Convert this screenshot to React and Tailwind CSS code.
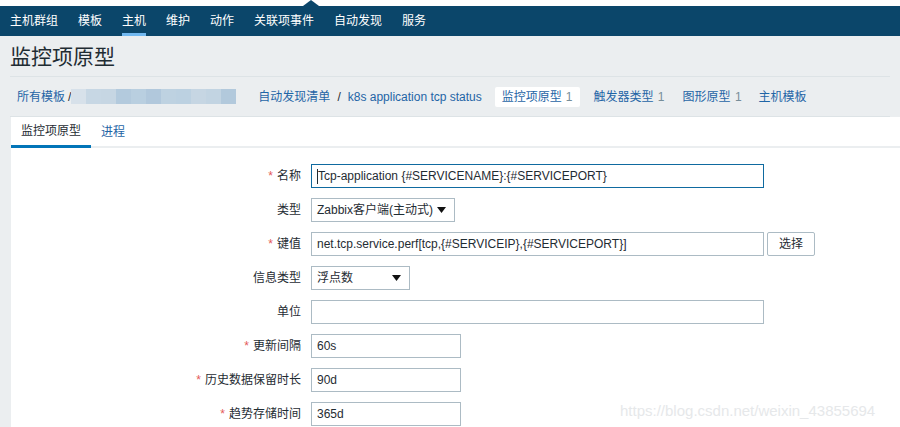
import React from 'react';

const font = { fontFamily: '"Liberation Sans", Arial, "Noto Sans CJK SC", sans-serif' };

const navItems = ['主机群组', '模板', '主机', '维护', '动作', '关联项事件', '自动发现', '服务'];

// pixelated blur blocks in the breadcrumb
const blurBlocks = ['#d7e1ea', '#c7d7e4', '#c6d6e3', '#b3cadd', '#b9cfe0', '#b1c8dc', '#bed2e1', '#bcd1e1', '#c6d6e3', '#c2d4e2', '#b2c9dc'];

function Caret() {
  return (
    <svg width="9" height="6" viewBox="0 0 9 6" className="ml-auto shrink-0">
      <path d="M0 0 L9 0 L4.5 6 Z" fill="#111" />
    </svg>
  );
}

function Label({ text, required }) {
  return (
    <div className="w-[311px] shrink-0 pr-[10px] text-right text-[12px] text-[#1f2c33] whitespace-nowrap">
      {required && <span className="text-[#e45959] mr-[4px]">*</span>}
      {text}
    </div>
  );
}

function TextField({ value, width, focused }) {
  return (
    <div
      className={`h-[24px] flex items-center px-[5px] text-[12px] text-[#1f2c33] bg-white border whitespace-nowrap ${
        focused ? 'border-[#0f6aa0]' : 'border-[#acbbc4]'
      } ${width}`}
    >
      {focused && <span className="w-px h-[15px] bg-[#1f2c33]" />}
      {value}
    </div>
  );
}

function Select({ value, width }) {
  return (
    <div className={`h-[24px] flex items-center gap-[4px] pl-[5px] pr-[8px] text-[12px] text-[#1f2c33] bg-white border border-[#acbbc4] whitespace-nowrap ${width}`}>
      <span>{value}</span>
      <Caret />
    </div>
  );
}

function Row({ label, required, children }) {
  return (
    <div className="flex items-center h-[24px]">
      <Label text={label} required={required} />
      <div className="flex items-center gap-[3px]">{children}</div>
    </div>
  );
}

export default function App() {
  return (
    <div className="w-[900px] h-[427px] overflow-hidden bg-[#ebeef0] relative" style={font}>
      {/* top strip */}
      <div className="h-[6px] bg-white relative">
        <svg width="16" height="6" viewBox="0 0 16 6" className="absolute left-[303px] top-0">
          <path d="M0 6 L8 0 L16 6 Z" fill="#0b466a" />
        </svg>
      </div>

      {/* main nav */}
      <div className="h-[30px] bg-[#0b466a] flex items-stretch pl-[10px] gap-[20px] text-[12px] text-white">
        {navItems.map((item) => (
          <div
            key={item}
            className={`flex items-center border-b-[3px] pt-[3px] ${
              item === '主机' ? 'border-[#71b8f0]' : 'border-transparent'
            }`}
          >
            {item}
          </div>
        ))}
      </div>

      {/* title */}
      <div className="h-[41px] mx-[10px] flex items-center border-b border-[#dde3e6]">
        <h1 className="text-[21px] text-[#1f2c33] leading-none">监控项原型</h1>
      </div>

      {/* breadcrumbs */}
      <div className="h-[40px] mx-[10px] flex items-center text-[12px] border-b border-[#dde3e6] whitespace-nowrap">
        <span className="pl-[7px] text-[#1f65a6]">所有模板</span>
        <span className="ml-[3px] text-[#1f2c33]">/</span>
        <div className="flex h-[15px]">
          {blurBlocks.map((c, i) => (
            <div key={i} className="w-[15px] h-[15px]" style={{ background: c }} />
          ))}
        </div>
        <span className="ml-[22px] text-[#1f65a6]">自动发现清单</span>
        <span className="mx-[7px] text-[#1f2c33]">/</span>
        <span className="text-[#1f65a6]">k8s application tcp status</span>
        <span className="ml-[13px] bg-white rounded-[2px] px-[7px] h-[20px] flex items-center text-[#1f65a6]">
          监控项原型 <span className="ml-1 text-[#768d99]">1</span>
        </span>
        <span className="ml-[14px] text-[#1f65a6]">
          触发器类型 <span className="ml-px text-[#768d99]">1</span>
        </span>
        <span className="ml-[18px] text-[#1f65a6]">
          图形原型 <span className="ml-px text-[#768d99]">1</span>
        </span>
        <span className="ml-[17px] text-[#1f65a6]">主机模板</span>
      </div>

      {/* panel */}
      <div className="ml-[11px] bg-white h-[320px]">
        <div className="flex h-[31px] border-b-[2px] border-[#ebeef0] text-[12px]">
          <div className="w-[80px] flex items-center justify-center border-b-[3px] border-[#0275b8] -mb-[2px] text-[#1f2c33]">
            监控项原型
          </div>
          <div className="px-[10px] flex items-center text-[#1f65a6]">进程</div>
        </div>

        <div className="flex flex-col gap-[10px] pt-[16px] -ml-[11px]">
          <Row label="名称" required>
            <TextField value="Tcp-application {#SERVICENAME}:{#SERVICEPORT}" width="w-[453px]" focused />
          </Row>
          <Row label="类型">
            <Select value="Zabbix客户端(主动式)" width="w-[144px]" />
          </Row>
          <Row label="键值" required>
            <TextField value="net.tcp.service.perf[tcp,{#SERVICEIP},{#SERVICEPORT}]" width="w-[453px]" />
            <button className="h-[24px] w-[48px] border border-[#acbbc4] rounded-[2px] bg-white text-[12px] text-[#1f2c33]">
              选择
            </button>
          </Row>
          <Row label="信息类型">
            <Select value="浮点数" width="w-[99px]" />
          </Row>
          <Row label="单位">
            <TextField value="" width="w-[453px]" />
          </Row>
          <Row label="更新间隔" required>
            <TextField value="60s" width="w-[150px]" />
          </Row>
          <Row label="历史数据保留时长" required>
            <TextField value="90d" width="w-[150px]" />
          </Row>
          <Row label="趋势存储时间" required>
            <TextField value="365d" width="w-[150px]" />
          </Row>
        </div>
      </div>

      {/* watermark */}
      <div className="absolute left-[620px] top-[400px] text-[15px] text-[#e6e8ea]" style={font}>
        https://blog.csdn.net/weixin_43855694
      </div>
    </div>
  );
}
